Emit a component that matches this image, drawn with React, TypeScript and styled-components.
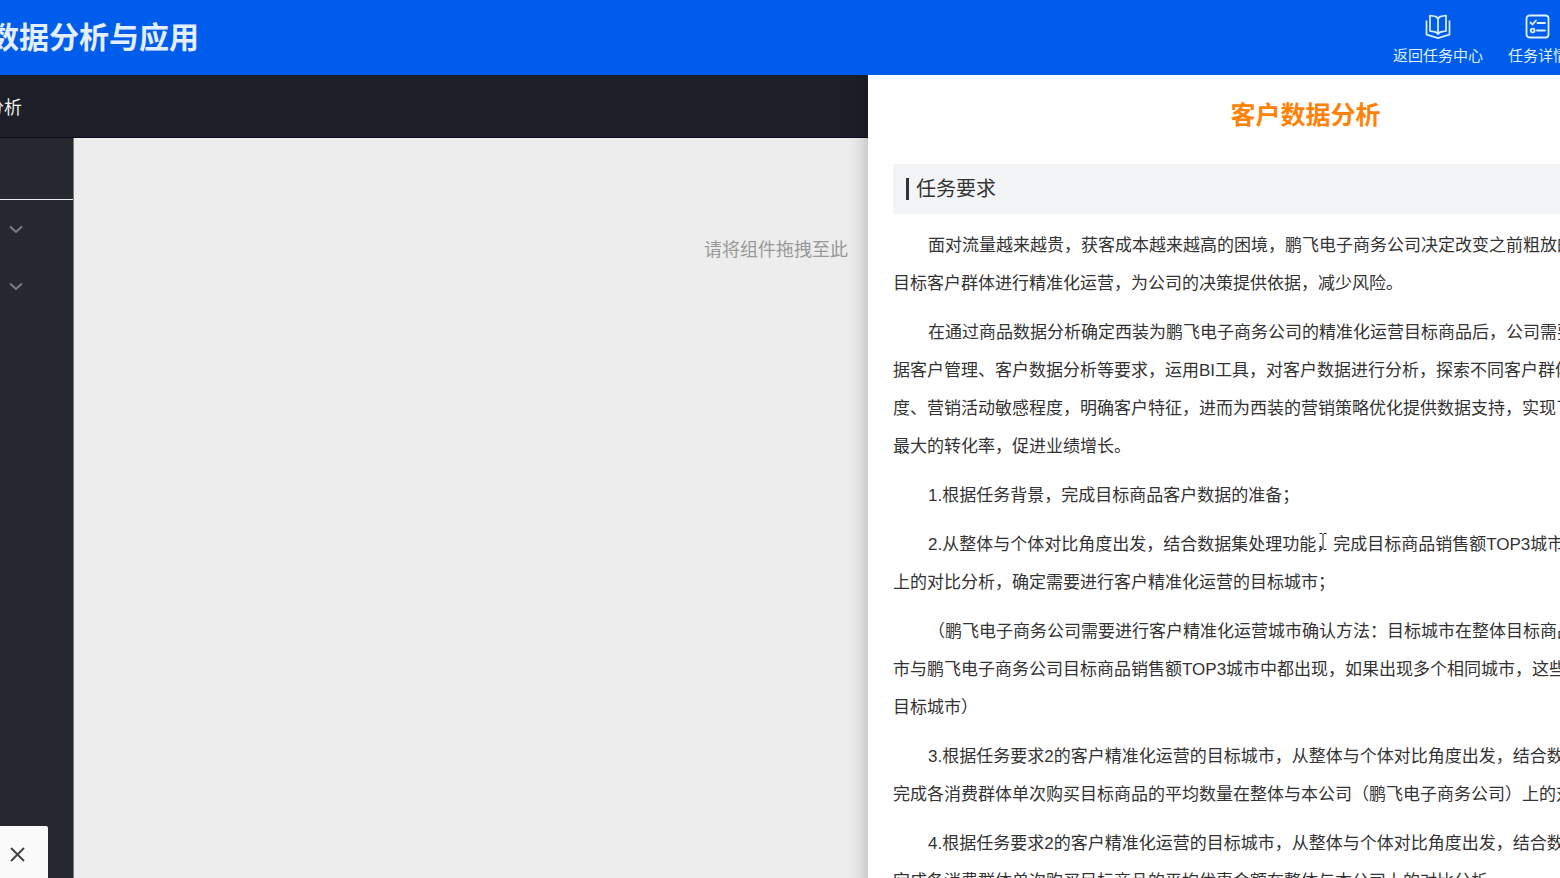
import React from 'react';
import styled, { createGlobalStyle } from 'styled-components';

const GlobalStyle = createGlobalStyle`
  * { box-sizing: border-box; }
  body {
    margin: 0;
    overflow: hidden;
    font-family: "Liberation Sans", "Noto Sans CJK SC", sans-serif;
    font-size: 18px;
    color: #333;
  }
  button { border: 0; padding: 0; background: none; font: inherit; color: inherit; cursor: pointer; }
`;

const Page = styled.div`
  display: flex;
  flex-direction: column;
  height: 100vh;
  overflow: hidden;
`;

const Header = styled.header`
  display: flex;
  flex: none;
  justify-content: space-between;
  align-items: center;
  height: 75px;
  margin: 0 -8px 0 -11px;
  background: #005ceb;
  color: #e3eeff;
`;

const Brand = styled.h1`
  margin: 0;
  font-size: 30px;
  line-height: 44px;
  font-weight: 700;
  white-space: nowrap;
`;

const Nav = styled.nav`
  display: flex;
  gap: 25px;
  padding-top: 5px;
`;

const NavLink = styled.a`
  display: flex;
  flex-direction: column;
  align-items: center;
  gap: 6px;
  color: #dff0ff;
  font-size: 15px;
  line-height: 22px;
  text-decoration: none;
  white-space: nowrap;
`;

const Body = styled.div`
  display: grid;
  grid-template-columns: calc(100% - 692px) 875px;
  flex: 1;
  min-height: 0;
`;

const Workspace = styled.main`
  display: flex;
  flex-direction: column;
  min-height: 0;
  min-width: 0;
`;

const TabBar = styled.div`
  display: flex;
  align-items: center;
  flex: none;
  height: 63px;
  padding-top: 3px;
  background: #1c1f27;
  border-bottom: 1px solid #0c0e18;
  overflow: hidden;
`;

const Tab = styled.button`
  margin-left: -14px;
  color: #eee;
  line-height: 26px;
  white-space: nowrap;
`;

const Editor = styled.div`
  display: flex;
  flex: 1;
  min-height: 0;
`;

const Sidebar = styled.aside`
  flex: none;
  width: 74px;
  background: #25282f;
  border-right: 1px solid #77787b;
`;

const SidebarHead = styled.div`
  height: 62px;
  border-bottom: 1px solid #e6ebee;
`;

const Group = styled.button`
  display: flex;
  align-items: center;
  width: 100%;
  height: 57px;
  padding: 2px 0 0 9px;
  color: #7b7e84;
`;

const Canvas = styled.section`
  flex: 1;
  padding: 99px 20px 0 0;
  background: #ededed;
  color: #999;
  text-align: right;
`;

const Hint = styled.p`
  margin: 0;
  line-height: 26px;
`;

const Panel = styled.article`
  z-index: 1;
  padding: 20px 25px 0;
  background: #fff;
  box-shadow: 0 0 20px rgba(0, 0, 0, 0.28);
  clip-path: inset(0 0 0 -24px);
`;

const PanelTitle = styled.h2`
  margin: 0 0 29px;
  color: #ff8208;
  font-size: 25px;
  line-height: 40px;
  text-align: center;
`;

const SectionTitle = styled.h3`
  display: flex;
  align-items: center;
  gap: 7px;
  height: 50px;
  margin: 0 0 13px;
  padding-left: 13px;
  background: #f3f4f6;
  font-size: 20px;
  line-height: 28px;
  font-weight: 400;

  &::before {
    content: "";
    width: 3px;
    height: 22px;
    background: #333;
  }
`;

const Paragraph = styled.p`
  margin: 0 0 11px;
  font-size: 17px;
  line-height: 38px;
  text-indent: 35px;
  white-space: nowrap;
`;

const Line = styled.span`
  display: block;

  & + & { text-indent: 0; }
`;

const Anchor = styled.span`
  position: relative;
`;

const TextCursor = styled.svg`
  position: absolute;
  top: -2px;
  right: 6px;
`;

const Popup = styled.div`
  position: fixed;
  left: 0;
  bottom: 0;
  z-index: 2;
  display: flex;
  align-items: center;
  justify-content: flex-end;
  width: 48px;
  height: 52px;
  padding: 4px 23px 0 0;
  background: #fafafa;
  border-radius: 0 2px 0 0;
  color: #444;
`;

const CloseButton = styled.button`
  display: flex;
`;

const BookIcon = () => (
  <svg width="26" height="25" viewBox="0 0 26 25" fill="none" stroke="currentColor" strokeWidth="1.7" strokeLinejoin="round" aria-hidden="true">
    <path d="M13 4.500L10.800 2.500L5 1.500v15.500l6 1.200L13 20l2-1.800 6-1.200V1.500l-5.800 1L13 4.500zM13 4.500V20" />
    <path d="M1.500 6.500v14L13 24l11.500-3.500v-14" strokeLinejoin="miter" />
  </svg>
);

const TaskIcon = () => (
  <svg width="25" height="25" viewBox="0 0 25 25" fill="none" stroke="currentColor" strokeWidth="1.8" strokeLinecap="round" aria-hidden="true">
    <rect x="1.500" y="1.500" width="22" height="22" rx="3" />
    <path d="M5.500 8.500l2 2 3.500-4M12.500 9h7.500M12 16.500h8" />
    <circle cx="7.700" cy="16.500" r="1.900" />
  </svg>
);

const ChevronIcon = () => (
  <svg width="14" height="10" viewBox="0 0 14 10" fill="none" stroke="currentColor" strokeWidth="2" aria-hidden="true">
    <path d="M1 1.500l6 5.500 6-5.500" />
  </svg>
);

const CloseIcon = () => (
  <svg width="15" height="15" viewBox="0 0 15 15" fill="none" stroke="currentColor" strokeWidth="2" aria-hidden="true">
    <path d="M1 1l13 13M14 1L1 14" />
  </svg>
);

const Caret = () => (
  <TextCursor width="8" height="17" viewBox="0 0 8 17" fill="none" stroke="#222" aria-hidden="true">
    <path d="M0.500 0.500h2.500l1 1 1-1h2.500M4 1.500v14M0.500 16.500h2.500l1-1 1 1h2.500" />
  </TextCursor>
);

const paragraphs: React.ReactNode[][] = [
  [
    '面对流量越来越贵，获客成本越来越高的困境，鹏飞电子商务公司决定改变之前粗放的',
    '目标客户群体进行精准化运营，为公司的决策提供依据，减少风险。',
  ],
  [
    '在通过商品数据分析确定西装为鹏飞电子商务公司的精准化运营目标商品后，公司需要',
    '据客户管理、客户数据分析等要求，运用BI工具，对客户数据进行分析，探索不同客户群体',
    '度、营销活动敏感程度，明确客户特征，进而为西装的营销策略优化提供数据支持，实现了',
    '最大的转化率，促进业绩增长。',
  ],
  ['1.根据任务背景，完成目标商品客户数据的准备；'],
  [
    <>
      2.从整体与个体对比角度出发，结合数据集处理功能<Anchor>，<Caret /></Anchor>完成目标商品销售额TOP3城市
    </>,
    '上的对比分析，确定需要进行客户精准化运营的目标城市；',
  ],
  [
    '（鹏飞电子商务公司需要进行客户精准化运营城市确认方法：目标城市在整体目标商品',
    '市与鹏飞电子商务公司目标商品销售额TOP3城市中都出现，如果出现多个相同城市，这些',
    '目标城市）',
  ],
  [
    '3.根据任务要求2的客户精准化运营的目标城市，从整体与个体对比角度出发，结合数',
    '完成各消费群体单次购买目标商品的平均数量在整体与本公司（鹏飞电子商务公司）上的对',
  ],
  [
    '4.根据任务要求2的客户精准化运营的目标城市，从整体与个体对比角度出发，结合数',
    '完成各消费群体单次购买目标商品的平均优惠金额在整体与本公司上的对比分析。',
  ],
];

export default function App() {
  return (
    <Page>
      <GlobalStyle />
      <Header>
        <Brand>数据分析与应用</Brand>
        <Nav>
          <NavLink href="#center"><BookIcon />返回任务中心</NavLink>
          <NavLink href="#detail"><TaskIcon />任务详情</NavLink>
        </Nav>
      </Header>
      <Body>
        <Workspace>
          <TabBar><Tab type="button">分析</Tab></TabBar>
          <Editor>
            <Sidebar>
              <SidebarHead />
              <Group type="button" aria-label="展开"><ChevronIcon /></Group>
              <Group type="button" aria-label="展开"><ChevronIcon /></Group>
            </Sidebar>
            <Canvas><Hint>请将组件拖拽至此</Hint></Canvas>
          </Editor>
        </Workspace>
        <Panel>
          <PanelTitle>客户数据分析</PanelTitle>
          <SectionTitle>任务要求</SectionTitle>
          {paragraphs.map((lines, i) => (
            <Paragraph key={i}>
              {lines.map((line, j) => <Line key={j}>{line}</Line>)}
            </Paragraph>
          ))}
        </Panel>
      </Body>
      <Popup>
        <CloseButton type="button" aria-label="关闭"><CloseIcon /></CloseButton>
      </Popup>
    </Page>
  );
}
